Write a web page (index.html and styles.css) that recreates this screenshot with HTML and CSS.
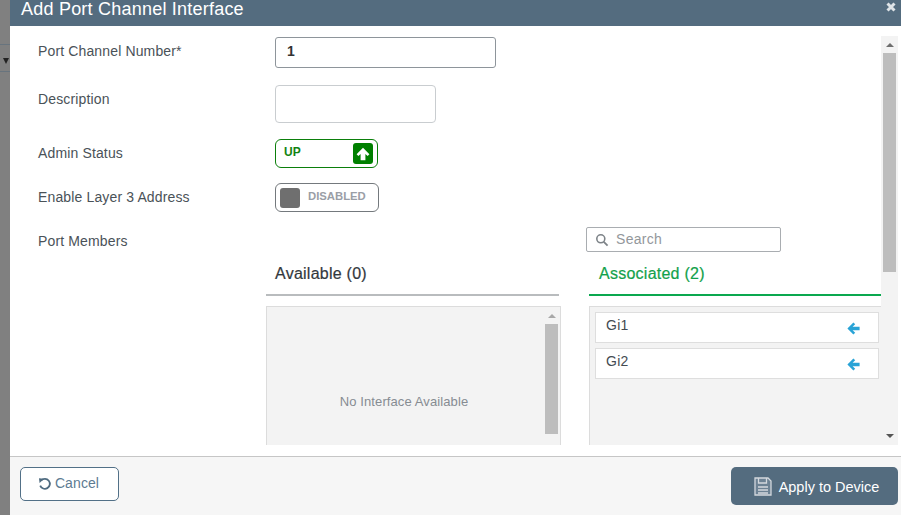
FILE: index.html
```html
<!DOCTYPE html>
<html lang="en">
<head>
<meta charset="utf-8">
<title>Add Port Channel Interface</title>
<link rel="stylesheet" href="styles.css">
</head>
<body>
<div class="page">
  <div class="backdrop">
    <div class="bd-line bd-line-a"></div>
    <div class="bd-caret"></div>
    <div class="bd-line bd-line-b"></div>
  </div>
  <div class="modal">
    <header class="modal-head">
      <h1 class="modal-title">Add Port Channel Interface</h1>
      <svg class="close-icon" width="10" height="10" viewBox="0 0 10 10"><path d="M1.5 1.5L8.5 8.5M8.5 1.5L1.5 8.5" stroke="#dfe4e8" stroke-width="3"/></svg>
    </header>
    <div class="modal-body">
      <div class="form">
        <div class="row row-number">
          <label class="label">Port Channel Number*</label>
          <div class="input input-number">1</div>
        </div>
        <div class="row row-desc">
          <label class="label">Description</label>
          <div class="input input-desc"></div>
        </div>
        <div class="row row-admin">
          <label class="label">Admin Status</label>
          <div class="toggle toggle-up">
            <span class="toggle-text">UP</span>
            <span class="up-box"><svg width="14" height="14" viewBox="0 0 14 14"><path d="M7 .8L13.4 7.2L11.6 9L9.4 6.9V13.2H4.6V6.9L2.4 9L.6 7.2Z" fill="#fff"/></svg></span>
          </div>
        </div>
        <div class="row row-l3">
          <label class="label">Enable Layer 3 Address</label>
          <div class="toggle toggle-off">
            <span class="off-box"></span>
            <span class="toggle-text">DISABLED</span>
          </div>
        </div>
        <div class="row row-members">
          <label class="label">Port Members</label>
          <div class="search">
            <svg width="14" height="14" viewBox="0 0 14 14"><circle cx="5.8" cy="5.8" r="4" fill="none" stroke="#7d8388" stroke-width="1.6"/><path d="M8.8 8.8L12.6 12.6" stroke="#7d8388" stroke-width="1.8"/></svg>
            <span>Search</span>
          </div>
        </div>
        <div class="columns">
          <section class="col col-avail">
            <h2 class="col-head">Available (0)</h2>
            <div class="list list-avail">
              <div class="empty">No Interface Available</div>
              <div class="mini-bar">
                <span class="tri-up tri-light"></span>
                <span class="mini-thumb"></span>
              </div>
            </div>
          </section>
          <section class="col col-assoc">
            <h2 class="col-head">Associated (2)</h2>
            <div class="list list-assoc">
              <div class="item"><span>Gi1</span><svg width="13" height="13" viewBox="0 0 13 13"><path d="M6.4 .4L.4 6.5L6.4 12.6L8.2 10.8L5.6 8.2H12.6V4.8H5.6L8.2 2.2Z" fill="#29a3d6"/></svg></div>
              <div class="item"><span>Gi2</span><svg width="13" height="13" viewBox="0 0 13 13"><path d="M6.4 .4L.4 6.5L6.4 12.6L8.2 10.8L5.6 8.2H12.6V4.8H5.6L8.2 2.2Z" fill="#29a3d6"/></svg></div>
            </div>
          </section>
        </div>
      </div>
      <div class="scrollbar">
        <span class="tri-up"></span>
        <span class="thumb"></span>
        <span class="spacer"></span>
        <span class="tri-down"></span>
      </div>
    </div>
    <footer class="modal-foot">
      <button class="btn btn-cancel" type="button">
        <svg width="14" height="14" viewBox="0 0 14 14"><path d="M3.2 3.4A5 5 0 1 1 2.2 8.6" fill="none" stroke="#4f6b80" stroke-width="1.8"/><path d="M1 1.2L6 1.8L1.6 6Z" fill="#4f6b80"/></svg>
        <span class="cancel-text">Cancel</span>
      </button>
      <button class="btn btn-apply" type="button">
        <svg width="18" height="19" viewBox="0 0 18 19"><path d="M1 1H14L17 4V18H1Z" fill="#6d8294" stroke="#d3d8dd" stroke-width="1.3"/><path d="M4.5 1V6H12.5V1" fill="none" stroke="#d3d8dd" stroke-width="1.3"/><path d="M4 10H14M4 13H14M4 16H14" stroke="#d3d8dd" stroke-width="1.3"/></svg>
        <span class="apply-text">Apply to Device</span>
      </button>
    </footer>
  </div>
</div>
</body>
</html>
```
FILE: styles.css
```css
* { box-sizing: border-box; }
html, body { margin: 0; height: 100%; overflow: hidden; }
body { font-family: "Liberation Sans", Arial, sans-serif; color: #39424a; background: #808080; }
.page { display: flex; width: 901px; height: 515px; }

.backdrop { width: 10px; flex: none; background: #808080; display: flex; flex-direction: column; align-items: flex-end; padding-top: 44px; }
.bd-line { width: 10px; height: 1px; background: #68747e; }
.bd-caret { width: 0; height: 0; margin: 13px 1px 7px 0; border-left: 3px solid transparent; border-right: 3px solid transparent; border-top: 6px solid #222; }

.modal { flex: 1; min-width: 0; display: flex; flex-direction: column; background: #fff; }
.modal-head { height: 26px; flex: none; background: #546c7f; display: flex; justify-content: space-between; padding: 0 5px 0 11px; }
.modal-title { margin: 0; font-size: 18px; line-height: 18px; font-weight: 400; color: #fff; letter-spacing: 0.22px; }
.close-icon { margin-top: 2px; }

.modal-body { height: 431px; flex: none; display: flex; padding-top: 11px; padding-bottom: 11px; border-bottom: 1px solid #c6c6c6; }
.form { flex: none; width: 871px; padding-left: 28px; overflow: hidden; }
.row { display: grid; grid-template-columns: 237px 1fr; }
.label { font-size: 14px; line-height: 16px; color: #4a5258; letter-spacing: 0.14px; }
.row-number { height: 31px; align-items: center; margin-bottom: 17px; }
.row-number .label { margin-top: -4px; }
.row-desc { height: 38px; margin-bottom: 16px; }
.row-desc .label { margin-top: 6px; }
.row-admin { height: 29px; align-items: center; margin-bottom: 15px; }
.row-admin .label { margin-top: -2px; }
.row-l3 { height: 29px; align-items: center; margin-bottom: 15px; }
.row-l3 .label { margin-top: -2px; }
.row-members { height: 25px; align-items: center; }
.row-members .label { margin-top: 3px; }

.input { border-radius: 3px; font-size: 14px; font-weight: 700; color: #333; padding-left: 11px; background: #fff; }
.input-number { width: 221px; height: 31px; line-height: 27px; border: 1px solid #8e959b; }
.input-desc { width: 161px; height: 38px; border: 1px solid #c9cdd0; border-radius: 4px; }

.toggle { height: 29px; border-radius: 6px; display: flex; align-items: center; font-size: 12px; font-weight: 700; background: #fff; }
.toggle-up { width: 103px; border: 1px solid #0b7f0b; color: #128412; justify-content: space-between; padding: 0 4px 0 8px; }
.toggle-up .toggle-text { margin-top: -3px; }
.up-box { width: 20px; height: 21px; border-radius: 3px; background: #008000; display: flex; align-items: center; justify-content: center; }
.toggle-off { width: 104px; border: 1px solid #74797d; color: #9a9ea6; padding-left: 4px; gap: 8px; font-size: 11.3px; }
.off-box { width: 20px; height: 20px; border-radius: 3px; background: #6f6f6f; }
.toggle-off .toggle-text { margin-top: -4px; }

.search { margin-left: 311px; width: 195px; height: 25px; border: 1px solid #a9adb1; border-radius: 2px; display: flex; align-items: center; gap: 7px; padding-left: 8px; font-size: 14px; color: #93979b; letter-spacing: 0.3px; }
.search span { margin-top: -1px; }

.columns { display: grid; grid-template-columns: 295px 292px; column-gap: 28px; margin-left: 228px; }
.col-head { margin: 0; height: 44px; font-size: 16px; line-height: 20px; font-weight: 400; padding-top: 12px; letter-spacing: 0.25px; -webkit-text-stroke: 0.2px currentColor; }
.col-avail .col-head { color: #33383d; padding-left: 9px; border-bottom: 2px solid #b9bcbe; margin-right: 2px; }
.col-assoc .col-head { color: #12a14b; padding-left: 10px; border-bottom: 2px solid #0aa84f; }
.list { height: 139px; margin-top: 10px; background: #f3f3f3; border: 1px solid #dcdcdc; border-bottom: 0; }
.list-avail { display: flex; }
.empty { flex: 1; text-align: center; font-size: 13px; color: #868c92; padding-top: 87px; padding-right: 2px; letter-spacing: 0.1px; }
.mini-bar { width: 17px; flex: none; display: flex; flex-direction: column; align-items: center; padding-top: 7px; }
.mini-thumb { width: 13px; height: 110px; background: #bdbdbd; margin-top: 6px; }
.list-assoc { padding: 5px 0 0 5px; border-right: 0; }
.item { width: 284px; height: 31px; margin-bottom: 5px; background: #fff; border: 1px solid #dedede; display: flex; justify-content: space-between; align-items: center; padding: 0 18px 0 10px; font-size: 14px; color: #444b52; }
.item span { margin-top: -5px; letter-spacing: 0.3px; }
.item svg { margin-top: 2px; }

.scrollbar { width: 17px; flex: none; background: #f3f3f3; display: flex; flex-direction: column; align-items: center; padding-top: 7px; padding-bottom: 7px; margin-top: -1px; }
.thumb { width: 13px; height: 219px; background: #bdbdbd; margin-top: 6px; }
.spacer { flex: 1; }
.tri-up { width: 0; height: 0; border-left: 4px solid transparent; border-right: 4px solid transparent; border-bottom: 4px solid #6e6e6e; }
.tri-light { border-bottom-color: #a8a8a8; }
.tri-down { width: 0; height: 0; border-left: 4px solid transparent; border-right: 4px solid transparent; border-top: 4px solid #555; }

.modal-foot { flex: 1; background: #f6f6f6; display: flex; justify-content: space-between; align-items: flex-start; padding: 10px 3px 0 10px; }
.btn { font-family: inherit; font-size: 14px; display: flex; align-items: center; justify-content: center; border-radius: 5px; padding: 0; }
.btn-cancel { width: 99px; height: 34px; gap: 3px; border: 1px solid #527087; background: #fff; color: #5d7b92; letter-spacing: 0.1px; padding-right: 2px; }
.cancel-text { margin-top: -2px; }
.btn-apply { width: 167px; height: 38px; gap: 7px; border: 0; background: #546c7f; color: #fff; font-size: 14.5px; padding-left: 4px; }
.apply-text { margin-top: 1px; }
```
